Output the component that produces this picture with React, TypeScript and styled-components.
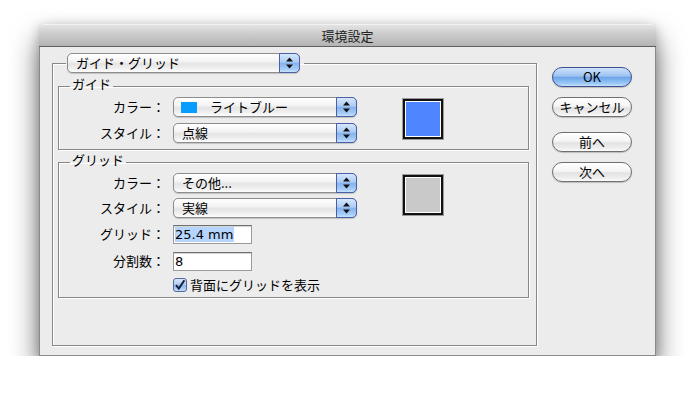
import { ReactNode } from "react";
import styled, { createGlobalStyle } from "styled-components";

const GlobalStyle = createGlobalStyle`
  html, body {
    margin: 0;
    background: #fff;
  }
  body {
    font-family: "Noto Sans CJK JP", "Noto Sans", sans-serif;
    font-size: 13px;
    color: #000;
  }
`;

const ArrowPair = () => (
  <svg width="7" height="12" viewBox="0 0 7 12">
    <polygon points="3.5,0.5 7,4.5 0,4.5" fill="#111" />
    <polygon points="0,7.5 7,7.5 3.5,11.5" fill="#111" />
  </svg>
);

type PopupProps = {
  width: number;
  swatch?: string;
  children: ReactNode;
};

const Popup = ({ width, swatch, children }: PopupProps) => (
  <PopupBox $width={width}>
    <PopupText>
      {swatch && <InlineSwatch $color={swatch} />}
      {children}
    </PopupText>
    <Stepper>
      <ArrowPair />
    </Stepper>
  </PopupBox>
);

const App = () => {
  return (
    <>
      <GlobalStyle />
      <Screen>
        <Window>
          <TitleBar>環境設定</TitleBar>
          <WindowBody>
            <MainGroup>
              <MainLegend>
                <Popup width={233}>ガイド・グリッド</Popup>
              </MainLegend>

              <SubGroup $gap={3}>
                <SubLegend>ガイド</SubLegend>
                <FormGrid $bottom={6}>
                  <Label>カラー：</Label>
                  <RowCell>
                    <Popup width={184} swatch="#0a9bff">
                      ライトブルー
                    </Popup>
                  </RowCell>
                  <ColorWell $color="#4f86ff" />
                  <Label $top={6}>スタイル：</Label>
                  <RowCell $top={6}>
                    <Popup width={184}>点線</Popup>
                  </RowCell>
                </FormGrid>
              </SubGroup>

              <SubGroup $gap={2}>
                <SubLegend>グリッド</SubLegend>
                <FormGrid $bottom={4}>
                  <Label>カラー：</Label>
                  <RowCell>
                    <Popup width={184}>その他...</Popup>
                  </RowCell>
                  <ColorWell $color="#c9c9c9" />
                  <Label $top={5}>スタイル：</Label>
                  <RowCell $top={5}>
                    <Popup width={184}>実線</Popup>
                  </RowCell>
                  <Label $top={6}>グリッド：</Label>
                  <RowCell $top={6}>
                    <TextField>
                      <Selected>25.4 mm</Selected>
                    </TextField>
                  </RowCell>
                  <Label $top={7}>分割数：</Label>
                  <RowCell $top={7}>
                    <TextField>8</TextField>
                  </RowCell>
                  <CheckRow>
                    <CheckBox>
                      <svg width="12" height="12" viewBox="0 0 12 12">
                        <path
                          d="M2 6.2 L4.8 9.6 L10.4 1.2"
                          fill="none"
                          stroke="#15203f"
                          strokeWidth="2"
                        />
                      </svg>
                    </CheckBox>
                    背面にグリッドを表示
                  </CheckRow>
                </FormGrid>
              </SubGroup>
            </MainGroup>

            <ButtonColumn>
              <PushButton $primary>OK</PushButton>
              <PushButton $top={10}>キャンセル</PushButton>
              <PushButton $top={15}>前へ</PushButton>
              <PushButton $top={10}>次へ</PushButton>
            </ButtonColumn>
          </WindowBody>
        </Window>
      </Screen>
    </>
  );
};

export default App;

const Screen = styled.div`
  padding: 24px 0 0 39px;
`;

const Window = styled.div`
  width: 615px;
  height: 331px;
  border: 1px solid #8a8a8a;
  border-top: none;
  border-radius: 5px 5px 0 0;
  background: #ececec;
  box-shadow: 0 16px 28px rgba(0, 0, 0, 0.58), 0 2px 12px rgba(0, 0, 0, 0.2);
  display: flex;
  flex-direction: column;
`;

const TitleBar = styled.div`
  height: 22px;
  margin: 0 -1px;
  border-radius: 5px 5px 0 0;
  border-bottom: 1px solid #5f5f5f;
  background: linear-gradient(#e6e6e6, #c9c9c9 50%, #b4b4b4);
  box-shadow: inset 0 1px 0 #f2f2f2;
  display: flex;
  align-items: center;
  justify-content: center;
  font-size: 13px;
  color: #222;
`;

const WindowBody = styled.div`
  flex: 1;
  display: flex;
  padding: 6px 23px 9px 12px;
  gap: 15px;
`;

const MainGroup = styled.fieldset`
  width: 478px;
  min-width: 0;
  margin: 0;
  padding: 0 0 0 5px;
  border: 1px solid #878787;
  box-shadow: 1px 1px 0 #fff, inset 1px 1px 0 #fff;
  flex: none;
`;

const MainLegend = styled.legend`
  margin-left: 8px;
  padding: 0 4px 0 1px;
  display: flex;
`;

const SubGroup = styled.fieldset<{ $gap: number }>`
  width: 469px;
  min-width: 0;
  margin: ${(p) => p.$gap}px 0 0;
  padding: 0;
  border: 1px solid #878787;
  box-shadow: 1px 1px 0 #fff, inset 1px 1px 0 #fff;
`;

const SubLegend = styled.legend`
  margin-left: 11px;
  padding: 0 2px 5px;
  line-height: 16px;
  font-size: 13px;
`;

const FormGrid = styled.div<{ $bottom: number }>`
  display: grid;
  grid-template-columns: 106px 184px auto;
  column-gap: 8px;
  align-items: center;
  padding-bottom: ${(p) => p.$bottom}px;
`;

const Label = styled.div<{ $top?: number }>`
  grid-column: 1;
  text-align: right;
  margin-top: ${(p) => p.$top ?? 0}px;
  font-size: 13px;
  line-height: 20px;
  white-space: nowrap;
`;

const RowCell = styled.div<{ $top?: number }>`
  grid-column: 2;
  margin-top: ${(p) => p.$top ?? 0}px;
  display: flex;
`;

const PopupBox = styled.div<{ $width: number }>`
  width: ${(p) => p.$width}px;
  height: 20px;
  box-sizing: border-box;
  display: flex;
  border: 1px solid #8d8d8d;
  border-radius: 5px;
  background: linear-gradient(#ffffff, #f4f4f4 40%, #e4e4e4 55%, #f0f0f0 80%, #fdfdfd);
  box-shadow: 0 1px 1px rgba(0, 0, 0, 0.18);
`;

const PopupText = styled.div`
  flex: 1;
  display: flex;
  align-items: center;
  padding-left: 8px;
  font-size: 13px;
  line-height: 18px;
  white-space: nowrap;
`;

const InlineSwatch = styled.span<{ $color: string }>`
  width: 16px;
  height: 11px;
  margin: 0 13px 0 -1px;
  background: ${(p) => p.$color};
`;

const Stepper = styled.div`
  width: 19px;
  margin: -1px -1px -1px 0;
  border: 1px solid #4a5fa6;
  border-radius: 0 5px 5px 0;
  background: linear-gradient(#d6e7fb, #acccf4 45%, #86b3ee 52%, #a6cdf7 85%, #c8e2fc);
  display: flex;
  align-items: center;
  justify-content: center;
`;

const ColorWell = styled.div<{ $color: string }>`
  grid-column: 3;
  grid-row: 1 / span 2;
  align-self: start;
  margin: 2px 0 0 38px;
  width: 40px;
  height: 40px;
  box-sizing: border-box;
  border: 2px solid #111;
  background: ${(p) => p.$color};
  box-shadow: inset 0 0 0 1px #fff, 0 0 0 1px #9a9a9a;
`;

const TextField = styled.div`
  width: 79px;
  height: 19px;
  box-sizing: border-box;
  border: 1px solid #9a9a9a;
  border-top-color: #6f6f6f;
  background: #fff;
  box-shadow: inset 0 1px 0 #d6d6d6;
  padding: 1px 0 0 1px;
  font-family: "DejaVu Sans", "Noto Sans", sans-serif;
  font-size: 13px;
  line-height: 16px;
`;

const Selected = styled.span`
  background: #b5d5ff;
  padding-right: 1px;
`;

const CheckRow = styled.label`
  grid-column: 2 / span 2;
  margin-top: 6px;
  display: flex;
  align-items: center;
  gap: 3px;
  font-size: 13px;
  line-height: 16px;
`;

const CheckBox = styled.span`
  width: 14px;
  height: 14px;
  box-sizing: border-box;
  border: 1px solid #56689c;
  border-radius: 3px;
  background: linear-gradient(#d9e8fb, #a9c9f2 50%, #8cb7ee 55%, #c3defa);
  display: flex;
  align-items: center;
  justify-content: center;
`;

const ButtonColumn = styled.div`
  display: flex;
  flex-direction: column;
  padding-top: 14px;
`;

const PushButton = styled.button<{ $primary?: boolean; $top?: number }>`
  width: 80px;
  height: 20px;
  margin-top: ${(p) => p.$top ?? 0}px;
  padding: 0;
  border-radius: 10px;
  border: 1px solid ${(p) => (p.$primary ? "#3f4f91" : "#6f6f6f")};
  background: ${(p) =>
    p.$primary
      ? "linear-gradient(#cfe2fa, #9cc3f2 45%, #6ea4ea 52%, #98c8f6 85%, #c6e3fd)"
      : "linear-gradient(#ffffff, #f5f5f5 45%, #e2e2e2 55%, #efefef 85%, #fcfcfc)"};
  box-shadow: 0 1px 1px rgba(0, 0, 0, 0.2);
  font-family: "Noto Sans CJK JP", "Noto Sans", sans-serif;
  font-size: 13px;
  line-height: 18px;
  color: #000;
`;
